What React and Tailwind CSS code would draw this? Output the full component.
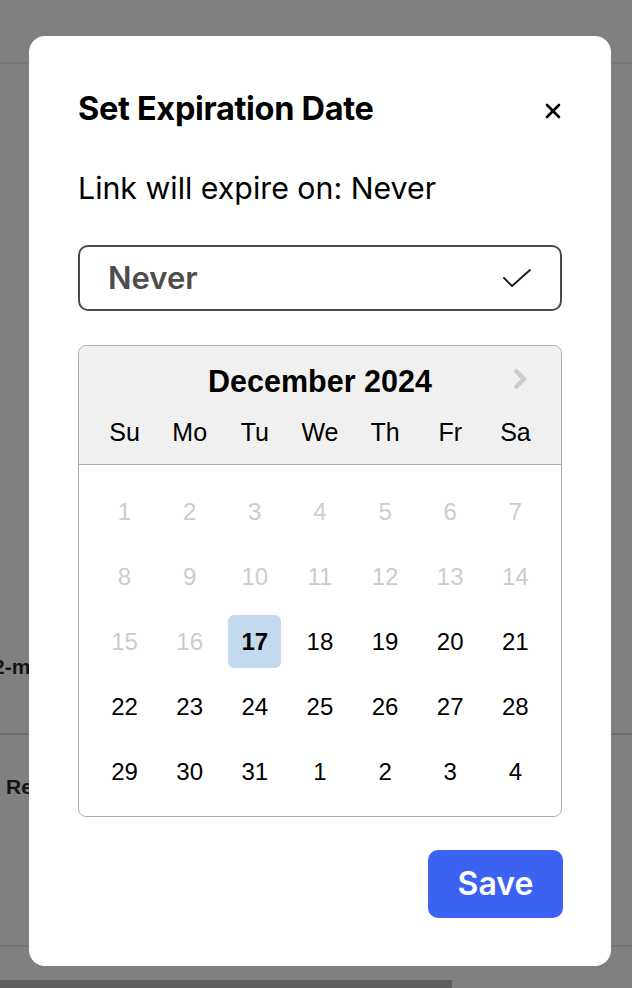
import { X } from 'lucide-react';

const days = [
  [1, 2, 3, 4, 5, 6, 7],
  [8, 9, 10, 11, 12, 13, 14],
  [15, 16, 17, 18, 19, 20, 21],
  [22, 23, 24, 25, 26, 27, 28],
  [29, 30, 31, 1, 2, 3, 4],
];

const weekdays = ['Su', 'Mo', 'Tu', 'We', 'Th', 'Fr', 'Sa'];

function DayCell({ value, row }) {
  const disabled = row < 2 || (row === 2 && value < 17);
  const selected = row === 2 && value === 17;

  return (
    <div className="flex h-[65px] w-[65px] items-center justify-center">
      <div
        className={
          selected
            ? 'flex h-[53px] w-[53px] items-center justify-center rounded-[6px] bg-[#c3d9ee] font-bold text-black'
            : disabled
            ? 'flex h-[53px] w-[53px] items-center justify-center text-[#cccccc]'
            : 'flex h-[53px] w-[53px] items-center justify-center text-black'
        }
      >
        {value}
      </div>
    </div>
  );
}

export default function App() {
  return (
    <div className="relative h-[988px] w-full overflow-hidden bg-[#808080]" style={{ fontFamily: 'Inter, sans-serif' }}>

      {/* page behind the overlay */}
      <div className="flex flex-col">
        <div className="h-[62px]" />
        <div className="h-[2px] bg-[#767676]" />
        <div className="h-[588px]" />
        <div className="ml-[-7px] h-[30px] text-[21px] leading-[30px] font-bold text-[#141414]" style={{ fontFamily: '"Liberation Sans", Arial, sans-serif' }}>
          2-month
        </div>
        <div className="h-[51px]" />
        <div className="h-[2px] bg-[#6e6e6e]" />
        <div className="h-[37px]" />
        <div className="ml-[6px] h-[30px] text-[21px] leading-[30px] font-bold text-[#141414]" style={{ fontFamily: '"Liberation Sans", Arial, sans-serif' }}>
          Renew
        </div>
        <div className="h-[143px]" />
        <div className="h-[2px] bg-[#747474]" />
        <div className="h-[33px]" />
        <div className="h-[8px] w-[452px] bg-[#5f5f5f]" />
      </div>

      {/* === MODAL === */}
      <div className="absolute left-[29px] top-[36px] w-[582px] rounded-[16px] bg-white px-[49px] pb-[48px] pt-[54px]">
        <div className="flex h-[38px] items-center justify-between">
          <h2 className="text-[32.5px] leading-[38px] font-bold tracking-[-0.01em] text-black">Set Expiration Date</h2>
          <X className="mr-[-3px] mt-[3px] h-[24px] w-[24px] text-black" strokeWidth={2.6} />
        </div>

        <div className="mt-[42px] h-[36px] text-[30.3px] leading-[36px] text-black">
          Link will expire on: Never
        </div>

        <div className="mt-[39px] flex h-[66px] items-center justify-between rounded-[10px] border-2 border-[#4a4a4a] pl-[28px] pr-[28px]">
          <span className="text-[31px] font-semibold text-[#4d4d4d]">Never</span>
          <svg width="30" height="20" viewBox="0 0 30 20" fill="none">
            <path d="M2 10 L10 18 L28 2" stroke="#1a1a1a" strokeWidth="1.8" strokeLinecap="round" strokeLinejoin="round" />
          </svg>
        </div>

        {/* CALENDAR */}
        <div
          className="mt-[34px] overflow-hidden rounded-[8px] border border-[#aeaeae]"
          style={{ fontFamily: '"Liberation Sans", Arial, sans-serif' }}
        >
          <div className="relative border-b border-[#aeaeae] bg-[#f0f0f0] px-[13px] pt-[19px] pb-[17px]">
            <div className="h-[32px] text-center text-[30.5px] leading-[32px] font-bold text-black">December 2024</div>
            <svg className="absolute right-[32px] top-[21px]" width="18" height="24" viewBox="0 0 18 24" fill="none">
              <path d="M4 3 L13 12 L4 21" stroke="#cccccc" strokeWidth="4.5" strokeLinejoin="miter" />
            </svg>
            <div className="mt-[20px] grid grid-cols-7">
              {weekdays.map(d => (
                <div key={d} className="h-[30px] text-center text-[25px] leading-[30px] text-black">{d}</div>
              ))}
            </div>
          </div>

          <div className="px-[13px] pt-[14px] pb-[12px]">
            {days.map((week, row) => (
              <div key={row} className="grid grid-cols-7 text-[24px]">
                {week.map((v, i) => (
                  <DayCell key={i} value={v} row={row} />
                ))}
              </div>
            ))}
          </div>
        </div>

        <div className="mt-[33px] flex justify-end">
          <button className="mr-[-1px] h-[68px] w-[135px] rounded-[10px] bg-[#3b62f1] text-[32px] font-semibold text-white">
            Save
          </button>
        </div>
      </div>
    </div>
  );
}
